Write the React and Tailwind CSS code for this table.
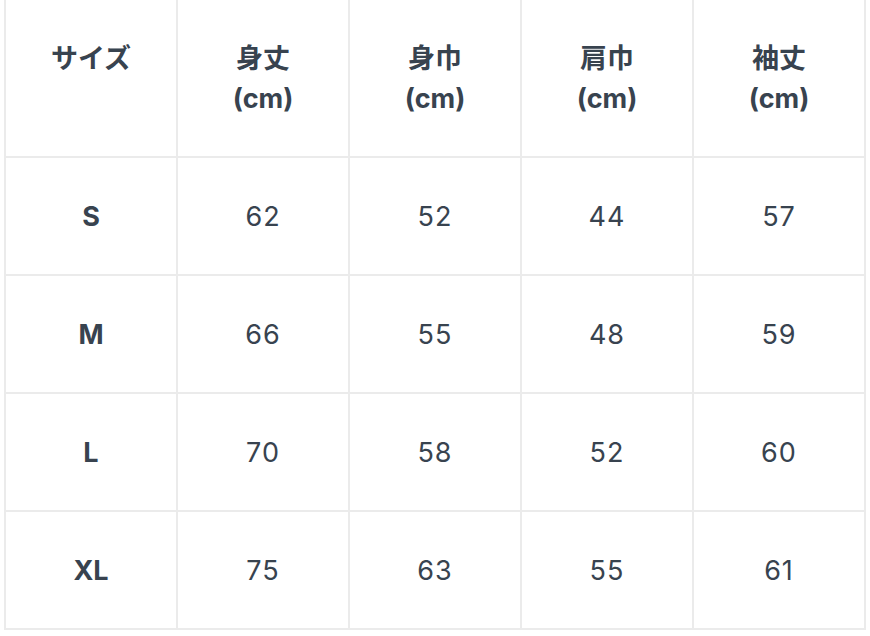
import React from "react";

const headers = [
  ["サイズ"],
  ["身丈", "(cm)"],
  ["身巾", "(cm)"],
  ["肩巾", "(cm)"],
  ["袖丈", "(cm)"],
];

const rows = [
  ["S", "62", "52", "44", "57"],
  ["M", "66", "55", "48", "59"],
  ["L", "70", "58", "52", "60"],
  ["XL", "75", "63", "55", "61"],
];

const App = () => {
  return (
    <div
      className="w-[870px] h-[636px] overflow-hidden bg-white pl-[4px] text-[#38434f]"
      style={{ fontFamily: '"Inter", "Noto Sans CJK JP", sans-serif' }}
    >
      <div className="grid grid-cols-[repeat(5,172px)] border-l-2 border-[#ebebeb]">
        {/* Header */}
        {headers.map((h, i) => (
          <div
            key={i}
            className="h-[158px] flex flex-col items-center pt-[39px] border-r-2 border-b-2 border-[#ebebeb] text-[27px] leading-[40px] font-bold"
          >
            {h.map((line, j) => (
              <span key={j}>{line}</span>
            ))}
          </div>
        ))}

        {/* Body */}
        {rows.map((row) =>
          row.map((cell, i) => (
            <div
              key={row[0] + i}
              className={`h-[118px] flex items-center justify-center pt-[2px] border-r-2 border-b-2 border-[#ebebeb] text-[27px] ${
                i === 0 ? "font-bold" : "font-normal tracking-[1px]"
              }`}
            >
              {cell}
            </div>
          ))
        )}
      </div>
    </div>
  );
};

export default App;
